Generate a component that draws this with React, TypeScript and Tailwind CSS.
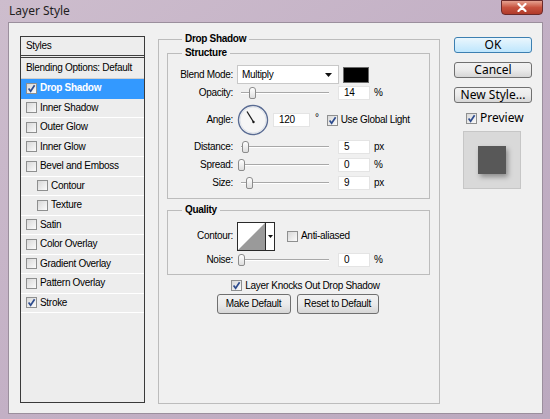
import React from 'react';

const styleItems: { name: string; checked?: boolean; indent?: boolean; selected?: boolean }[] = [
  { name: 'Drop Shadow', checked: true, selected: true },
  { name: 'Inner Shadow' },
  { name: 'Outer Glow' },
  { name: 'Inner Glow' },
  { name: 'Bevel and Emboss' },
  { name: 'Contour', indent: true },
  { name: 'Texture', indent: true },
  { name: 'Satin' },
  { name: 'Color Overlay' },
  { name: 'Gradient Overlay' },
  { name: 'Pattern Overlay' },
  { name: 'Stroke', checked: true },
];

function Check({ checked = false, className = '' }: { checked?: boolean; className?: string }) {
  return (
    <span
      className={`inline-flex h-[11px] w-[11px] shrink-0 items-center justify-center border border-[#8e8f8f] bg-gradient-to-br from-[#d8d8d8] to-[#fbfbfb] ${className}`}
    >
      {checked && (
        <svg viewBox="0 0 9 9" className="h-[9px] w-[9px]">
          <path d="M1.6 4.6 L3.6 7.2 L7.6 1.2" fill="none" stroke="#2e4c8e" strokeWidth="1.7" />
        </svg>
      )}
    </span>
  );
}

function NumBox({ value, w = 'w-[32px]' }: { value: string; w?: string }) {
  return (
    <div className={`flex h-[14px] items-center border border-[#e4e4e4] bg-white pl-[5px] ${w}`}>{value}</div>
  );
}

function Slider({ at }: { at: number }) {
  return (
    <div className="relative h-[18px] w-[96px] shrink-0">
      <div className="absolute left-[4px] top-[8px] h-[2px] w-[88px] border-t border-b border-t-[#a8a8a8] border-b-white" />
      <div
        className="absolute top-[3px] h-[12px] w-[7px] rounded-t-[3px] rounded-b-[2px] border border-[#8c8c8c] bg-gradient-to-b from-white to-[#dedede]"
        style={{ left: at }}
      />
    </div>
  );
}

function SliderRow({ label, at, value, unit }: { label: string; at: number; value: string; unit: string }) {
  return (
    <div className="flex h-[18px] items-center">
      <span className="w-[65px] text-right">{label}</span>
      <div className="ml-[4px]">
        <Slider at={at} />
      </div>
      <div className="ml-[5px]">
        <NumBox value={value} />
      </div>
      <span className="ml-[4px]">{unit}</span>
    </div>
  );
}

function Btn({ children, w, primary = false }: { children: React.ReactNode; w: string; primary?: boolean }) {
  return (
    <div
      className={`flex items-center justify-center rounded-[3px] border ${w} ${
        primary
          ? 'border-[#3c7fb1] bg-gradient-to-b from-[#eaf6fd] to-[#bee6fd]'
          : 'border-[#707070] bg-gradient-to-b from-[#f2f2f2] via-[#ebebeb] to-[#d6d6d6]'
      }`}
    >
      {children}
    </div>
  );
}

export default function App() {
  return (
    <div className="h-[419px] w-[550px] overflow-hidden whitespace-nowrap bg-gradient-to-br from-[#cdbdcd] via-[#c3b0c5] to-[#bba9bf] font-['Liberation_Sans',Arial,sans-serif] text-[10px] leading-none tracking-[-0.3px] text-black">
      {/* title bar */}
      <div className="flex h-[22px] items-center justify-between pl-[9px] pr-[7px]">
        <span className="font-['Noto_Sans',sans-serif] text-[12px] tracking-normal text-[#1e1e1e]">Layer Style</span>
        <div className="mb-[8px] flex h-[15px] w-[42px] items-center justify-center self-start rounded-b-[4px] border border-[#6b2a2a] bg-gradient-to-b from-[#e5a190] via-[#c7523f] to-[#b03a2a]">
          <svg viewBox="0 0 10 9" className="h-[9px] w-[10px]">
            <path d="M1.5 1 L8.5 8 M8.5 1 L1.5 8" stroke="white" strokeWidth="2.2" strokeLinecap="round" />
          </svg>
        </div>
      </div>

      {/* client area */}
      <div className="ml-[8px] mr-[7px] flex h-[392px] items-start border border-[#9b8f9d] bg-[#f0f0f0] pl-[11px]">
        {/* styles list */}
        <div className="mt-[13px] flex h-[367px] w-[125px] flex-col border border-[#3a3a3a] bg-[#ededed]">
          <div className="flex h-[21px] items-center border-b-[3px] border-double border-[#3f3f3f] pl-[5px]">Styles</div>
          <div className="flex h-[21px] items-center border-b border-[#cfcfcf] pl-[5px]">Blending Options: Default</div>
          {styleItems.map((s) => (
            <div
              key={s.name}
              className={`flex h-[19.5px] items-center border-b ${
                s.selected ? 'border-[#3399ff] bg-[#3399ff] font-bold text-white' : 'border-white'
              } ${s.indent ? 'pl-[16px]' : 'pl-[5px]'}`}
            >
              <Check checked={s.checked} className="mr-[3px]" />
              <span>{s.name}</span>
            </div>
          ))}
        </div>

        {/* drop shadow panel */}
        <fieldset className="ml-[13px] mt-[9px] h-[372px] w-[282px] border border-[#bcbcbc] px-[8px] pr-[9px]">
          <legend className="ml-[15px] px-[3px] font-bold leading-[14px]">Drop Shadow</legend>

          <fieldset className="border border-[#bcbcbc] pb-[6px]">
            <legend className="ml-[14px] px-[3px] font-bold leading-[14px]">Structure</legend>
            <div className="pt-[5px]">
              <div className="flex h-[19px] items-center">
                <span className="w-[65px] text-right">Blend Mode:</span>
                <div className="ml-[4px] flex h-[19px] w-[102px] items-center justify-between border border-[#c8c8c8] bg-white pl-[4px] pr-[6px]">
                  <span>Multiply</span>
                  <svg viewBox="0 0 7 4" className="h-[4px] w-[7px]">
                    <path d="M0 0 H7 L3.5 4 Z" fill="#111" />
                  </svg>
                </div>
                <div className="ml-[4px] h-[16px] w-[26px] border border-[#6a6a6a] bg-black" />
              </div>
              <SliderRow label="Opacity:" at={12} value="14" unit="%" />
              <div className="flex h-[36px] items-center">
                <span className="w-[65px] text-right">Angle:</span>
                <svg viewBox="0 0 32 32" className="ml-[4px] h-[32px] w-[32px]">
                  <circle cx="16" cy="16" r="14.5" fill="#f6f6f6" stroke="#5a6c93" strokeWidth="1.4" />
                  <circle cx="16" cy="16" r="13" fill="none" stroke="#dfe3ea" strokeWidth="1" />
                  <path d="M16.5 18 L10 7.5" stroke="#1a1a1a" strokeWidth="1.3" />
                  <circle cx="16.5" cy="18" r="1.2" fill="#1a1a1a" />
                </svg>
                <div className="ml-[4px]">
                  <NumBox value="120" w="w-[37px]" />
                </div>
                <span className="ml-[5px] self-start pt-[11px] text-[10px]">°</span>
                <Check checked className="ml-[8px]" />
                <span className="ml-[3px]">Use Global Light</span>
              </div>
              <SliderRow label="Distance:" at={5} value="5" unit="px" />
              <SliderRow label="Spread:" at={1} value="0" unit="%" />
              <SliderRow label="Size:" at={9} value="9" unit="px" />
            </div>
          </fieldset>

          <fieldset className="mt-[4px] border border-[#bcbcbc] pb-[5px]">
            <legend className="ml-[14px] px-[3px] font-bold leading-[14px]">Quality</legend>
            <div className="pt-[4px]">
              <div className="flex h-[30px] items-center">
                <span className="w-[65px] text-right">Contour:</span>
                <div className="ml-[4px] flex h-[29px] w-[38px] border border-[#2a2a2a] bg-white">
                  <svg viewBox="0 0 27 27" className="h-[27px] w-[27px]">
                    <path d="M0 27 L27 0 L27 27 Z" fill="#9a9a9a" />
                  </svg>
                  <div className="flex flex-1 items-center justify-center border-l border-[#2a2a2a]">
                    <svg viewBox="0 0 5 3" className="h-[3px] w-[5px]">
                      <path d="M0 0 H5 L2.5 3 Z" fill="#111" />
                    </svg>
                  </div>
                </div>
                <Check className="ml-[12px]" />
                <span className="ml-[3px]">Anti-aliased</span>
              </div>
              <SliderRow label="Noise:" at={1} value="0" unit="%" />
            </div>
          </fieldset>

          <div className="mt-[4px] flex h-[13px] items-center justify-center pl-[14px]">
            <Check checked />
            <span className="ml-[3px]">Layer Knocks Out Drop Shadow</span>
          </div>
          <div className="mt-[2px] flex justify-center gap-[6px] pr-[2px]">
            <Btn w="h-[20px] w-[74px]">Make Default</Btn>
            <Btn w="h-[20px] w-[82px]">Reset to Default</Btn>
          </div>
        </fieldset>

        {/* right column */}
        <div className="ml-[14px] mt-[14px] flex w-[78px] flex-col items-center font-['Noto_Sans',sans-serif] text-[12px] tracking-normal">
          <Btn w="h-[16px] w-[78px]" primary>
            OK
          </Btn>
          <div className="mt-[9px]">
            <Btn w="h-[16px] w-[78px]">Cancel</Btn>
          </div>
          <div className="mt-[9px]">
            <Btn w="h-[16px] w-[78px]">New Style...</Btn>
          </div>
          <div className="mt-[9px] flex items-center self-start pl-[12px]">
            <Check checked />
            <span className="ml-[3px]">Preview</span>
          </div>
          <div className="mt-[7px] flex h-[58px] w-[58px] items-center justify-center self-start ml-[9px] border border-[#c6c6c6] bg-[#d9d9d9]">
            <div className="h-[28px] w-[28px] bg-[#585858] shadow-[2px_3px_5px_rgba(0,0,0,0.35)]" />
          </div>
        </div>
      </div>
    </div>
  );
}
